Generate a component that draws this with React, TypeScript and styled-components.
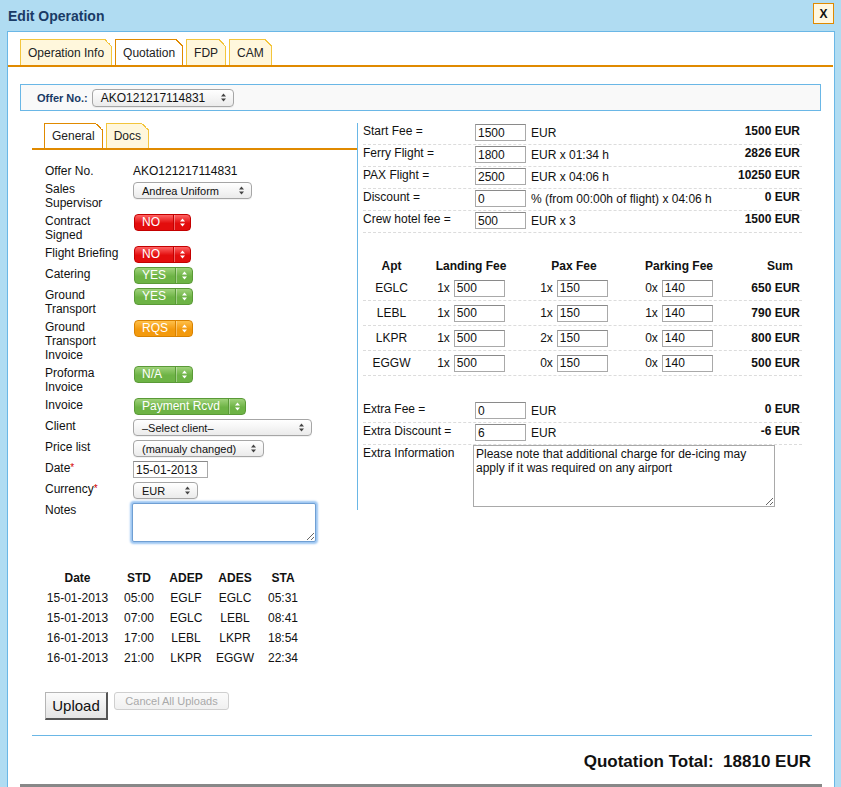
import styled, { createGlobalStyle } from 'styled-components';

const GlobalStyle = createGlobalStyle`
  html, body {
    margin: 0;
    padding: 0;
  }
  body {
    background: #b0dcf2;
    font-family: 'Liberation Sans', Arial, sans-serif;
    font-size: 12px;
    color: #111;
    overflow: hidden;
  }
  * {
    box-sizing: border-box;
  }
`;

const ORANGE = '#e08a00';
const BLUE_LINE = '#6ab7e6';

const Window = styled.div`
  height: 787px;
  overflow: hidden;
`;

const TitleBar = styled.div`
  height: 31px;
  display: flex;
  align-items: center;
  justify-content: space-between;
  padding: 0 7px 0 8px;
`;

const Title = styled.h1`
  margin: 0;
  font-size: 14px;
  font-weight: bold;
  color: #1a3b66;
`;

const CloseButton = styled.button`
  width: 21px;
  height: 21px;
  margin-top: -4px;
  padding: 0;
  border: 1px solid ${ORANGE};
  background: #fff7e0;
  font-family: 'Liberation Sans', Arial, sans-serif;
  font-size: 12px;
  font-weight: bold;
  color: #111;
`;

const Panel = styled.div`
  margin: 0 6px 0 7px;
  height: 760px;
  background: #fff;
  border: 1px solid ${BLUE_LINE};
  border-bottom: none;
`;

const TabRow = styled.div<{ $inset: number }>`
  display: flex;
  gap: 3px;
  padding-left: ${(p) => p.$inset}px;
  border-bottom: 2px solid ${ORANGE};
`;

const MainTabRow = styled(TabRow)`
  padding-top: 7px;
  margin-right: 1px;
`;

const Tab = styled.div<{ $active?: boolean }>`
  position: relative;
  height: 26px;
  padding: 0 7px;
  display: flex;
  align-items: center;
  font-size: 12px;
  color: #222;
  background: ${(p) => (p.$active ? '#fff' : '#fff7dc')};
  border: 1px solid ${(p) => (p.$active ? ORANGE : '#f3c53c')};
  border-bottom: none;

  &::after {
    content: '';
    position: absolute;
    top: -1px;
    right: -1px;
    width: 7px;
    height: 7px;
    background: linear-gradient(
      to bottom left,
      #fff 0,
      #fff 50%,
      ${(p) => (p.$active ? ORANGE : '#f3c53c')} 50%,
      ${(p) => (p.$active ? ORANGE : '#f3c53c')} calc(50% + 1px),
      transparent calc(50% + 1px)
    );
  }
`;

const SubTab = styled(Tab)`
  height: 25px;
`;

const OfferBar = styled.div`
  margin: 17px 13px 0 12px;
  height: 27px;
  display: flex;
  align-items: center;
  gap: 4px;
  padding-left: 16px;
  background: #f9f9f9;
  border: 1px solid ${BLUE_LINE};
`;

const OfferLabel = styled.span`
  font-size: 11px;
  font-weight: bold;
  color: #1a3b66;
`;

const Body = styled.div`
  display: flex;
  align-items: flex-start;
  padding: 0 32px 0 24px;
  margin-top: 12px;
`;

const LeftCol = styled.div`
  width: 325px;
`;

const RightCol = styled.div`
  flex: 1;
  border-left: 1px solid ${BLUE_LINE};
  padding: 0 0 3px 5px;
`;

const FormGrid = styled.div`
  display: grid;
  grid-template-columns: 88px auto;
  row-gap: 4px;
  margin-top: 14px;
  padding-left: 13px;
  align-items: start;
  justify-items: start;
`;

const Label = styled.div`
  line-height: 14px;
  font-size: 12px;
  color: #111;
`;

const Required = styled.span`
  color: #d40000;
  font-size: 10px;
  vertical-align: top;
`;

const Value = styled.div`
  line-height: 14px;
  font-size: 12px;
`;

const SelectBox = styled.div<{ $width: number; $height?: number }>`
  width: ${(p) => p.$width}px;
  height: ${(p) => p.$height ?? 17}px;
  display: flex;
  align-items: center;
  justify-content: space-between;
  padding: 0 7px 0 8px;
  border: 1px solid #a6a6a6;
  border-radius: 4px;
  background: linear-gradient(#ffffff, #ebebeb);
  font-size: 11px;
  color: #111;
  white-space: nowrap;
  box-shadow: 0 1px 0 rgba(0, 0, 0, 0.05);
`;

const OfferSelect = styled(SelectBox)`
  font-size: 12px;
`;

const pillColors = {
  red: ['#ff6464', '#e30d0d', '#c40000'],
  green: ['#9fd27a', '#6db345', '#5a9a37'],
  orange: ['#ffc04a', '#f39a0e', '#d98200'],
};

type Tone = keyof typeof pillColors;

const PillBox = styled.div<{ $tone: Tone; $width: number }>`
  width: ${(p) => p.$width}px;
  height: 17px;
  margin-left: 1px;
  display: flex;
  align-items: stretch;
  border-radius: 4px;
  border: 1px solid ${(p) => pillColors[p.$tone][2]};
  background: linear-gradient(
    ${(p) => pillColors[p.$tone][0]},
    ${(p) => pillColors[p.$tone][1]} 55%,
    ${(p) => pillColors[p.$tone][1]}
  );
  color: #fff;
  font-size: 12px;
  overflow: hidden;
`;

const PillText = styled.span`
  flex: 1;
  padding-left: 7px;
  line-height: 15px;
  white-space: nowrap;
`;

const PillArrow = styled.span<{ $tone: Tone }>`
  width: 17px;
  display: flex;
  align-items: center;
  justify-content: center;
  border-left: 1px solid ${(p) => pillColors[p.$tone][2]};
  box-shadow: inset 1px 0 0 rgba(255, 255, 255, 0.35);
`;

const TextInput = styled.input<{ $width: number }>`
  width: ${(p) => p.$width}px;
  height: 17px;
  padding: 0 2px;
  border: 1px solid #a9a9a9;
  border-top-color: #8a8a8a;
  font-family: 'Liberation Sans', Arial, sans-serif;
  font-size: 12px;
  color: #111;
  background: #fff;
`;

const NotesArea = styled.textarea`
  width: 184px;
  height: 39px;
  margin-left: -1px;
  border: 1px solid #6f9fd3;
  box-shadow: 0 0 2px 2px #9cc6f2;
  border-radius: 2px;
  font-family: 'Liberation Sans', Arial, sans-serif;
  font-size: 12px;
  resize: both;
`;

const FlightTable = styled.div`
  margin-top: 26px;
  padding-left: 13px;
`;

const FlightRow = styled.div<{ $head?: boolean }>`
  display: grid;
  grid-template-columns: 65px 58px 36px 62px 34px;
  height: 20px;
  line-height: 20px;
  font-size: 12px;
  font-weight: ${(p) => (p.$head ? 'bold' : 'normal')};
  text-align: center;
  white-space: nowrap;
`;

const UploadRow = styled.div`
  display: flex;
  align-items: flex-start;
  gap: 6px;
  margin-top: 24px;
  padding-left: 13px;
`;

const UploadButton = styled.button`
  width: 63px;
  height: 28px;
  padding: 0;
  border: 1px solid #b5b5b5;
  border-right: 2px solid #555;
  border-bottom: 2px solid #555;
  background: linear-gradient(#fbfbfb, #e4e4e4);
  font-family: 'Liberation Sans', Arial, sans-serif;
  font-size: 15px;
  color: #111;
`;

const CancelButton = styled.button`
  width: 115px;
  height: 18px;
  padding: 0;
  border: 1px solid #cfcfcf;
  border-radius: 3px;
  background: linear-gradient(#fbfbfb, #f0f0f0);
  font-family: 'Liberation Sans', Arial, sans-serif;
  font-size: 11px;
  color: #a9a9a9;
`;

const FeeRow = styled.div<{ $last?: boolean }>`
  display: flex;
  align-items: flex-start;
  height: ${(p) => (p.$last ? 'auto' : '22px')};
  border-bottom: ${(p) => (p.$last ? 'none' : '1px dashed #dcdcdc')};
  font-size: 12px;
  line-height: 14px;
`;

const FeeLabel = styled.div<{ $width?: number }>`
  width: ${(p) => p.$width ?? 112}px;
  flex-shrink: 0;
  padding-top: 1px;
`;

const FeeInput = styled(TextInput)`
  margin-top: 1px;
`;

const Unit = styled.span`
  margin-left: 5px;
  padding-top: 3px;
  white-space: nowrap;
`;

const Sum = styled.span`
  margin-left: auto;
  padding: 1px 2px 0 0;
  font-weight: bold;
  white-space: nowrap;
`;

const AptGrid = styled.div<{ $head?: boolean }>`
  display: grid;
  grid-template-columns: 57px 102px 104px 106px 1fr;
  align-items: center;
  height: ${(p) => (p.$head ? 20 : 25)}px;
  border-bottom: ${(p) => (p.$head ? 'none' : '1px dashed #dcdcdc')};
  font-size: 12px;
  font-weight: ${(p) => (p.$head ? 'bold' : 'normal')};
`;

const AptHeadRow = styled(AptGrid)`
  margin-top: 23px;
`;

const Center = styled.div`
  display: flex;
  justify-content: center;
  align-items: center;
  gap: 4px;
  white-space: nowrap;
`;

const Right = styled.div<{ $pad: number }>`
  text-align: right;
  padding-right: ${(p) => p.$pad}px;
  white-space: nowrap;
`;

const BoldRight = styled(Right)`
  font-weight: bold;
`;

const ExtraBlock = styled.div`
  margin-top: 25px;
`;

const InfoArea = styled.textarea`
  width: 302px;
  height: 62px;
  margin-left: -2px;
  padding: 1px 2px;
  border: 1px solid #a9a9a9;
  font-family: 'Liberation Sans', Arial, sans-serif;
  font-size: 12px;
  line-height: 14px;
  color: #111;
  resize: both;
`;

const Footer = styled.div`
  margin: 15px 22px 0 24px;
  border-top: 1px solid ${BLUE_LINE};
  padding-top: 17px;
  text-align: right;
  padding-right: 1px;
  font-size: 17px;
  font-weight: bold;
  line-height: 18px;
  white-space: pre;
`;

const BottomRule = styled.div`
  margin: 13px 12px 0 12px;
  border-top: 3px solid #888;
`;

const Arrows = ({ color }: { color: string }) => (
  <svg width="5" height="9" viewBox="0 0 5 9">
    <path d="M2.5 0.5L5 3.6H0Z M2.5 8.5L0 5.4H5Z" fill={color} />
  </svg>
);

const Select = ({ text, width }: { text: string; width: number }) => (
  <SelectBox $width={width}>
    <span>{text}</span>
    <Arrows color="#444" />
  </SelectBox>
);

const Pill = ({ text, tone, width }: { text: string; tone: Tone; width: number }) => (
  <PillBox $tone={tone} $width={width}>
    <PillText>{text}</PillText>
    <PillArrow $tone={tone}>
      <Arrows color="#fff" />
    </PillArrow>
  </PillBox>
);

const flights = [
  ['15-01-2013', '05:00', 'EGLF', 'EGLC', '05:31'],
  ['15-01-2013', '07:00', 'EGLC', 'LEBL', '08:41'],
  ['16-01-2013', '17:00', 'LEBL', 'LKPR', '18:54'],
  ['16-01-2013', '21:00', 'LKPR', 'EGGW', '22:34'],
];

const fees = [
  ['Start Fee =', '1500', 'EUR', '1500 EUR'],
  ['Ferry Flight =', '1800', 'EUR x 01:34 h', '2826 EUR'],
  ['PAX Flight =', '2500', 'EUR x 04:06 h', '10250 EUR'],
  ['Discount =', '0', '% (from 00:00h of flight) x 04:06 h', '0 EUR'],
  ['Crew hotel fee =', '500', 'EUR x 3', '1500 EUR'],
];

const airports = [
  { apt: 'EGLC', land: '1x', pax: '1x', park: '0x', sum: '650 EUR' },
  { apt: 'LEBL', land: '1x', pax: '1x', park: '1x', sum: '790 EUR' },
  { apt: 'LKPR', land: '1x', pax: '2x', park: '0x', sum: '800 EUR' },
  { apt: 'EGGW', land: '1x', pax: '0x', park: '0x', sum: '500 EUR' },
];

export default function App() {
  return (
    <>
      <GlobalStyle />
      <Window>
        <TitleBar>
          <Title>Edit Operation</Title>
          <CloseButton>X</CloseButton>
        </TitleBar>
        <Panel>
          <MainTabRow $inset={12}>
            <Tab>Operation Info</Tab>
            <Tab $active>Quotation</Tab>
            <Tab>FDP</Tab>
            <Tab>CAM</Tab>
          </MainTabRow>

          <OfferBar>
            <OfferLabel>Offer No.:</OfferLabel>
            <OfferSelect $width={142} $height={18}>
              <span>AKO121217114831</span>
              <Arrows color="#444" />
            </OfferSelect>
          </OfferBar>

          <Body>
            <LeftCol>
              <TabRow $inset={12}>
                <SubTab $active>General</SubTab>
                <SubTab>Docs</SubTab>
              </TabRow>

              <FormGrid>
                <Label>Offer No.</Label>
                <Value>AKO121217114831</Value>

                <Label>Sales<br />Supervisor</Label>
                <Select text="Andrea Uniform" width={119} />

                <Label>Contract<br />Signed</Label>
                <Pill text="NO" tone="red" width={57} />

                <Label>Flight Briefing</Label>
                <Pill text="NO" tone="red" width={57} />

                <Label>Catering</Label>
                <Pill text="YES" tone="green" width={59} />

                <Label>Ground<br />Transport</Label>
                <Pill text="YES" tone="green" width={59} />

                <Label>Ground<br />Transport<br />Invoice</Label>
                <Pill text="RQS" tone="orange" width={59} />

                <Label>Proforma<br />Invoice</Label>
                <Pill text="N/A" tone="green" width={59} />

                <Label>Invoice</Label>
                <Pill text="Payment Rcvd" tone="green" width={112} />

                <Label>Client</Label>
                <Select text="–Select client–" width={179} />

                <Label>Price list</Label>
                <Select text="(manualy changed)" width={131} />

                <Label>Date<Required>*</Required></Label>
                <TextInput $width={75} defaultValue="15-01-2013" />

                <Label>Currency<Required>*</Required></Label>
                <Select text="EUR" width={65} />

                <Label>Notes</Label>
                <NotesArea />
              </FormGrid>

              <FlightTable>
                <FlightRow $head>
                  <span>Date</span>
                  <span>STD</span>
                  <span>ADEP</span>
                  <span>ADES</span>
                  <span>STA</span>
                </FlightRow>
                {flights.map((f) => (
                  <FlightRow key={f[0] + f[1]}>
                    {f.map((c, i) => (
                      <span key={i}>{c}</span>
                    ))}
                  </FlightRow>
                ))}
              </FlightTable>

              <UploadRow>
                <UploadButton>Upload</UploadButton>
                <CancelButton disabled>Cancel All Uploads</CancelButton>
              </UploadRow>
            </LeftCol>

            <RightCol>
              {fees.map(([label, val, unit, sum]) => (
                <FeeRow key={label}>
                  <FeeLabel>{label}</FeeLabel>
                  <FeeInput $width={51} defaultValue={val} />
                  <Unit>{unit}</Unit>
                  <Sum>{sum}</Sum>
                </FeeRow>
              ))}

              <AptHeadRow $head>
                <Center>Apt</Center>
                <Center>Landing Fee</Center>
                <Center>Pax Fee</Center>
                <Center>Parking Fee</Center>
                <Right $pad={9}>Sum</Right>
              </AptHeadRow>
              {airports.map((a) => (
                <AptGrid key={a.apt}>
                  <Center>{a.apt}</Center>
                  <Center>
                    {a.land}
                    <TextInput $width={51} defaultValue="500" />
                  </Center>
                  <Center>
                    {a.pax}
                    <TextInput $width={51} defaultValue="150" />
                  </Center>
                  <Center>
                    {a.park}
                    <TextInput $width={51} defaultValue="140" />
                  </Center>
                  <BoldRight $pad={2}>{a.sum}</BoldRight>
                </AptGrid>
              ))}

              <ExtraBlock>
                <FeeRow>
                  <FeeLabel>Extra Fee =</FeeLabel>
                  <FeeInput $width={51} defaultValue="0" />
                  <Unit>EUR</Unit>
                  <Sum>0 EUR</Sum>
                </FeeRow>
                <FeeRow>
                  <FeeLabel>Extra Discount =</FeeLabel>
                  <FeeInput $width={51} defaultValue="6" />
                  <Unit>EUR</Unit>
                  <Sum>-6 EUR</Sum>
                </FeeRow>
                <FeeRow $last>
                  <FeeLabel>Extra Information</FeeLabel>
                  <InfoArea defaultValue="Please note that additional charge for de-icing may apply if it was required on any airport" />
                </FeeRow>
              </ExtraBlock>
            </RightCol>
          </Body>

          <Footer>{'Quotation Total:  18810 EUR'}</Footer>
          <BottomRule />
        </Panel>
      </Window>
    </>
  );
}
